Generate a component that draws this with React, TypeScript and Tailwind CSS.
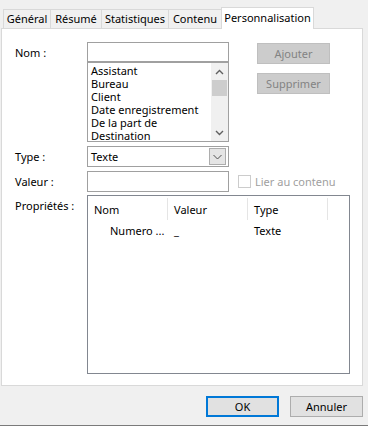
const tabs = [
  { label: "Général", w: "w-[47px]" },
  { label: "Résumé", w: "w-[51px]" },
  { label: "Statistiques", w: "w-[67px]" },
  { label: "Contenu", w: "w-[53px]" },
];

const names = ["Assistant", "Bureau", "Client", "Date enregistrement", "De la part de", "Destination"];

function Chevron({ up }: { up?: boolean }) {
  return (
    <svg width="9" height="6" viewBox="0 0 9 6" className="block">
      <path
        d={up ? "M1 5 L4.5 1.5 L8 5" : "M1 1 L4.5 4.5 L8 1"}
        fill="none"
        stroke="#606060"
        strokeWidth="1.4"
      />
    </svg>
  );
}

export default function App() {
  return (
    <div className="w-[368px] h-[426px] bg-[#f0f0f0] border-b border-[#7a7a7a] font-['Noto_Sans',sans-serif] text-[11px] text-black leading-[13px] overflow-hidden">
      {/* tabs */}
      <div className="h-[28px] flex items-end pl-[3px]">
        {tabs.map((t) => (
          <div
            key={t.label}
            className={`${t.w} h-[19px] border-l border-t border-[#d9d9d9] flex items-center justify-center pb-px whitespace-nowrap`}
          >
            {t.label}
          </div>
        ))}
        <div className="relative z-10 -mb-px w-[93px] h-[22px] bg-white border-l border-t border-r border-[#d9d9d9] flex items-center justify-center pb-[3px] whitespace-nowrap">
          Personnalisation
        </div>
      </div>

      {/* panel */}
      <div className="ml-[1px] w-[362px] h-[358px] bg-white border border-[#d9d9d9] pt-[13px] pl-[13px]">
        <div className="flex">
          <div className="w-[72px] h-[20px] flex items-center">Nom :</div>
          <div className="w-[142px] flex flex-col">
            <div className="h-[20px] border border-[#a0a0a0] bg-white" />
            <div className="h-[80px] border border-[#a0a0a0] flex overflow-hidden">
              <div className="flex-1 pl-[3px] pt-[1px]">
                {names.map((n) => (
                  <div key={n} className="h-[13px] flex items-center whitespace-nowrap">
                    {n}
                  </div>
                ))}
              </div>
              <div className="w-[17px] bg-[#f0f0f0] flex flex-col">
                <div className="h-[17px] flex items-center justify-center">
                  <Chevron up />
                </div>
                <div className="h-[16px] bg-[#cdcdcd] mx-[1px]" />
                <div className="flex-1" />
                <div className="h-[17px] flex items-center justify-center">
                  <Chevron />
                </div>
              </div>
            </div>
          </div>
          <div className="ml-[28px] pt-[1px] flex flex-col gap-[9px]">
            <div className="w-[73px] h-[21px] bg-[#cccccc] border border-[#bfbfbf] text-[#838383] flex items-center justify-center">
              Ajouter
            </div>
            <div className="w-[73px] h-[21px] bg-[#cccccc] border border-[#bfbfbf] text-[#838383] flex items-center justify-center">
              Supprimer
            </div>
          </div>
        </div>

        <div className="flex mt-[4px]">
          <div className="w-[72px] h-[21px] flex items-center">Type :</div>
          <div className="w-[142px] h-[21px] border border-[#a0a0a0] flex items-center justify-between pl-[3px] pr-[2px]">
            <span>Texte</span>
            <div className="w-[17px] h-[17px] bg-[#e5e5e5] border border-[#adadad] flex items-center justify-center">
              <svg width="9" height="6" viewBox="0 0 9 6" className="block">
                <path d="M0.5 1 L4.5 5 L8.5 1" fill="none" stroke="#505050" strokeWidth="1" />
              </svg>
            </div>
          </div>
        </div>

        <div className="flex mt-[4px] items-center">
          <div className="w-[72px] h-[21px] flex items-center">Valeur :</div>
          <div className="w-[142px] h-[21px] border border-[#a0a0a0]" />
          <div className="ml-[9px] w-[13px] h-[13px] border border-[#cccccc] bg-white" />
          <span className="ml-[4px] text-[#a0a0a0]">Lier au contenu</span>
        </div>

        <div className="flex mt-[3px]">
          <div className="w-[72px] pt-[4px]">Propriétés :</div>
          <div className="w-[263px] h-[179px] border border-[#828790] bg-white">
            <div className="h-[26px] flex items-center">
              {["Nom", "Valeur", "Type"].map((h) => (
                <div key={h} className="w-[80px] h-[22px] flex items-center justify-between">
                  <span className="pl-[6px]">{h}</span>
                  <div className="w-px h-[22px] bg-[#e5e5e5]" />
                </div>
              ))}
            </div>
            <div className="h-[17px] flex items-center">
              <div className="w-[80px] pl-[22px] whitespace-nowrap">Numero ...</div>
              <div className="w-[80px] pl-[6px]">_</div>
              <div className="w-[80px] pl-[6px]">Texte</div>
            </div>
          </div>
        </div>
      </div>

      {/* buttons */}
      <div className="mt-[10px] flex justify-end gap-[11px] pr-[5px]">
        <div className="w-[73px] h-[21px] bg-[#e1e1e1] border-2 border-[#0078d7] flex items-center justify-center">
          OK
        </div>
        <div className="w-[73px] h-[21px] bg-[#e1e1e1] border border-[#adadad] flex items-center justify-center">
          Annuler
        </div>
      </div>
    </div>
  );
}
